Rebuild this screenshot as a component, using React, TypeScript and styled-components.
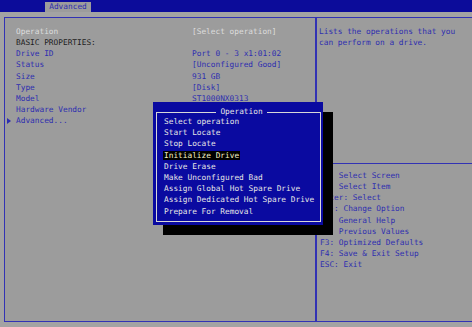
import styled, { createGlobalStyle } from 'styled-components';

const GlobalStyle = createGlobalStyle`
  html, body {
    margin: 0;
    padding: 0;
    background: #a3a3a3;
  }
  body {
    font-family: "DejaVu Sans Mono", "Liberation Mono", monospace;
    font-size: 7.8px;
  }
`;

const properties = [
  { label: 'Operation', value: '[Select operation]', kind: 'bright' },
  { label: 'BASIC PROPERTIES:', value: '', kind: 'dark' },
  { label: 'Drive ID', value: 'Port 0 - 3 x1:01:02', kind: 'blue' },
  { label: 'Status', value: '[Unconfigured Good]', kind: 'blue' },
  { label: 'Size', value: '931 GB', kind: 'blue' },
  { label: 'Type', value: '[Disk]', kind: 'blue' },
  { label: 'Model', value: 'ST1000NX0313', kind: 'blue' },
  { label: 'Hardware Vendor', value: '', kind: 'blue' },
];

const operations = [
  'Select operation',
  'Start Locate',
  'Stop Locate',
  'Initialize Drive',
  'Drive Erase',
  'Make Unconfigured Bad',
  'Assign Global Hot Spare Drive',
  'Assign Dedicated Hot Spare Drive',
  'Prepare For Removal',
];

const keys = [
  '\u2192\u2190: Select Screen',
  '\u2191\u2193: Select Item',
  'Enter: Select',
  '+/-: Change Option',
  'F1: General Help',
  'F2: Previous Values',
  'F3: Optimized Defaults',
  'F4: Save & Exit Setup',
  'ESC: Exit',
];

function App() {
  return (
    <Screen>
      <GlobalStyle />
      <TopBar>
        <Tab>Advanced</Tab>
      </TopBar>

      <Frame>
        <LeftPanel>
          {properties.map((p) => (
            <PropRow key={p.label} $kind={p.kind}>
              <span>{p.label}</span>
              <PropValue $bright={p.kind === 'bright'}>{p.value}</PropValue>
            </PropRow>
          ))}
          <SubMenu>Advanced...</SubMenu>
        </LeftPanel>

        <RightPanel>
          <HelpText>
            Lists the operations that you
            <br />
            can perform on a drive.
          </HelpText>
          <KeyList>
            {keys.map((k) => (
              <div key={k}>{k}</div>
            ))}
          </KeyList>
        </RightPanel>
      </Frame>

      <Popup>
        <PopupBox>
          <PopupTitle>Operation</PopupTitle>
          {operations.map((op) => (
            <PopupItem key={op}>
              <ItemText $selected={op === 'Initialize Drive'}>{op}</ItemText>
            </PopupItem>
          ))}
        </PopupBox>
      </Popup>
    </Screen>
  );
}

const Screen = styled.div`
  position: relative;
  width: 472px;
  height: 327px;
  overflow: hidden;
  background: #a3a3a3;
`;

const TopBar = styled.div`
  height: 12px;
  background: #0c0c9a;
  display: flex;
  align-items: flex-end;
`;

const Tab = styled.div`
  margin-left: 45px;
  width: 46px;
  height: 10px;
  background: #9c9c9c;
  color: #2e2eb0;
  line-height: 10px;
  text-align: center;
`;

const Frame = styled.div`
  margin: 5px 0 0 4px;
  height: 303px;
  border: 1px solid #3232b4;
  border-right: none;
  background: #9c9c9c;
  display: grid;
  grid-template-columns: 312px 1fr;
`;

const LeftPanel = styled.div`
  border-right: 2px solid #3232b4;
  padding: 8px 0 0 11px;
  line-height: 11.15px;
`;

const PropRow = styled.div<{ $kind: string }>`
  display: grid;
  grid-template-columns: 176px 1fr;
  white-space: pre;
  color: ${(p) =>
    p.$kind === 'bright' ? '#dcdcdc' : p.$kind === 'dark' ? '#1c1c1c' : '#2e2eb0'};
`;

const PropValue = styled.span<{ $bright: boolean }>`
  color: ${(p) => (p.$bright ? '#dcdcdc' : '#2e2eb0')};
`;

const SubMenu = styled.div`
  position: relative;
  color: #2e2eb0;

  &::before {
    content: '';
    position: absolute;
    left: -9px;
    top: 3px;
    border-left: 4px solid #2e2eb0;
    border-top: 3px solid transparent;
    border-bottom: 3px solid transparent;
  }
`;

const RightPanel = styled.div`
  display: grid;
  grid-template-rows: 146px 1fr;
  color: #2e2eb0;
  line-height: 11.15px;
`;

const HelpText = styled.div`
  padding: 8px 0 0 2px;
  border-bottom: 1px solid #3232b4;
`;

const KeyList = styled.div`
  padding: 6px 0 0 3px;
  white-space: pre;
`;

const Popup = styled.div`
  position: absolute;
  left: 153px;
  top: 102px;
  width: 170px;
  height: 123px;
  box-sizing: border-box;
  background: #0a0aa0;
  padding: 6px 2px 3px 3px;
  box-shadow: 10px 10px 0 #000;
`;

const PopupBox = styled.fieldset`
  margin: 0;
  height: 100%;
  box-sizing: border-box;
  border: 1px solid #d8d8d8;
  padding: 0 0 0 6px;
  line-height: 11.2px;
  color: #e6e6e6;
`;

const PopupTitle = styled.legend`
  margin: 0 auto;
  padding: 0 4px;
  line-height: 8px;
  color: #e6e6e6;
`;

const PopupItem = styled.div`
  white-space: pre;
`;

const ItemText = styled.span<{ $selected: boolean }>`
  padding: 0 1px;
  background: ${(p) => (p.$selected ? '#000' : 'transparent')};
  color: ${(p) => (p.$selected ? '#f6f2c8' : '#e6e6e6')};
`;

export default App;
